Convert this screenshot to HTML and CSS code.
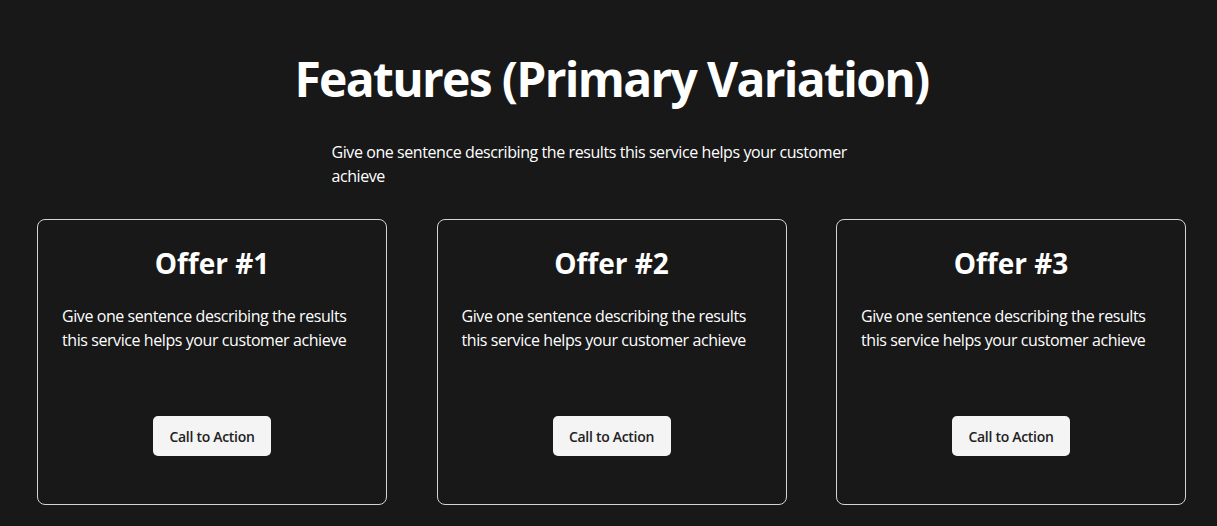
FILE: index.html
```html
<!DOCTYPE html>
<html lang="en">
<head>
<meta charset="utf-8">
<title>Features</title>
<link rel="stylesheet" href="styles.css">
</head>
<body>
<section class="features">
  <h1 class="features-title">Features (Primary Variation)</h1>
  <p class="features-lead">Give one sentence describing the results this service helps your customer achieve</p>
  <div class="offers">
    <div class="offer">
      <h2 class="offer-title">Offer #1</h2>
      <p class="offer-text">Give one sentence describing the results this service helps your customer achieve</p>
      <button class="offer-btn">Call to Action</button>
    </div>
    <div class="offer">
      <h2 class="offer-title">Offer #2</h2>
      <p class="offer-text">Give one sentence describing the results this service helps your customer achieve</p>
      <button class="offer-btn">Call to Action</button>
    </div>
    <div class="offer">
      <h2 class="offer-title">Offer #3</h2>
      <p class="offer-text">Give one sentence describing the results this service helps your customer achieve</p>
      <button class="offer-btn">Call to Action</button>
    </div>
  </div>
</section>
</body>
</html>
```
FILE: styles.css
```css
* { box-sizing: border-box; }
html, body {
  margin: 0;
  background: #181818;
  color: #ffffff;
  font-family: "Open Sans", "Noto Sans", sans-serif;
}
.features {
  display: flex;
  flex-direction: column;
  align-items: center;
  padding: 50px 0 0 6px;
}
.features-title {
  margin: 0;
  font-size: 48px;
  line-height: 58px;
  font-weight: 700;
  letter-spacing: -1.7px;
}
.features-lead {
  margin: 32px 0 0;
  width: 560px;
  font-size: 16px;
  line-height: 24px;
  letter-spacing: -0.42px;
}
.offers {
  display: flex;
  gap: 49.5px;
  margin-top: 31px;
}
.offer {
  width: 350px;
  height: 286px;
  border: 1px solid #d4d4d4;
  border-radius: 8px;
  padding: 25px 24px 48px;
  display: flex;
  flex-direction: column;
  align-items: center;
}
.offer-title {
  margin: 0;
  font-size: 28px;
  line-height: 36px;
  font-weight: 700;
}
.offer-text {
  margin: 23px 0 0;
  align-self: stretch;
  font-size: 16px;
  line-height: 24px;
  letter-spacing: -0.42px;
}
.offer-btn {
  margin-top: auto;
  width: 118px;
  height: 40px;
  border: none;
  border-radius: 5px;
  background: #f4f4f4;
  color: #222222;
  font-family: inherit;
  font-size: 14px;
  font-weight: 600;
  letter-spacing: -0.3px;
}
```
